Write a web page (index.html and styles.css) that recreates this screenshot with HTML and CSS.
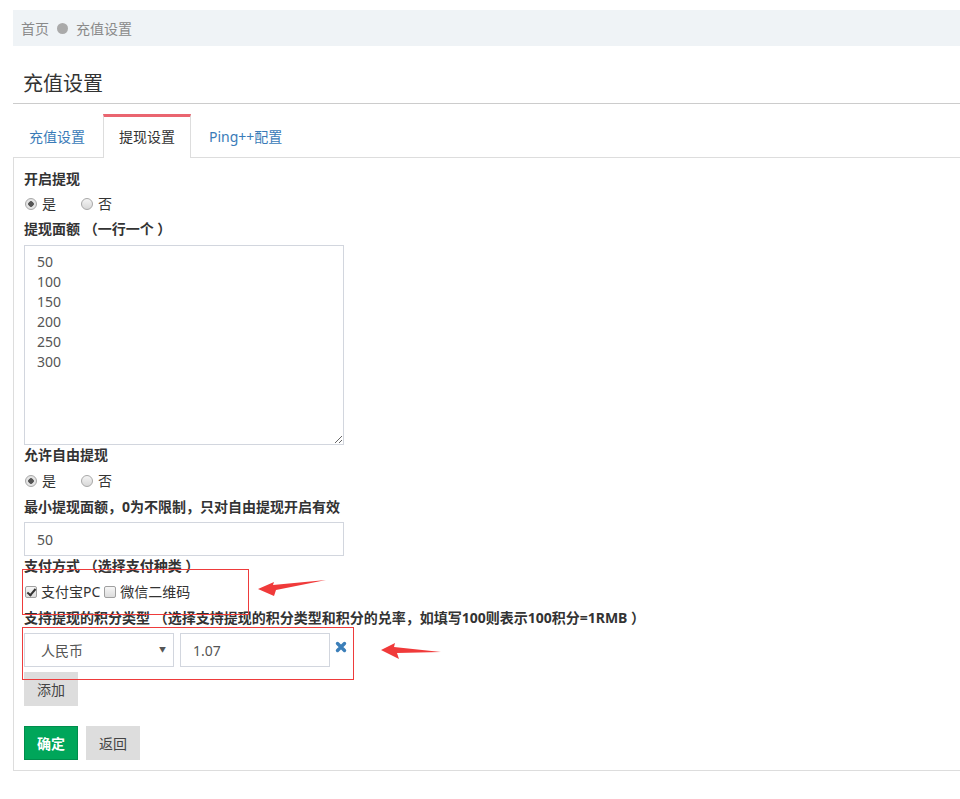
FILE: index.html
```html
<!DOCTYPE html>
<html lang="zh-CN">
<head>
  <meta charset="UTF-8">
  <title>充值设置</title>
  <link rel="stylesheet" href="styles.css">
</head>
<body>
  <div class="page">

    <!-- 面包屑 -->
    <div class="breadcrumb">
      <span>首页</span>
      <span class="dot"></span>
      <span>充值设置</span>
    </div>

    <!-- 标题 -->
    <div class="page-title">
      <h2>充值设置</h2>
    </div>

    <!-- 选项卡 -->
    <div class="tabs">
      <a href="#" class="tab">充值设置</a>
      <a href="#" class="tab active">提现设置</a>
      <a href="#" class="tab">Ping++配置</a>
    </div>

    <!-- 表单 -->
    <div class="panel">
      <label class="lbl">开启提现</label>
      <div class="radios">
        <label><input type="radio" name="open" checked> 是</label>
        <label><input type="radio" name="open"> 否</label>
      </div>

      <label class="lbl lbl-area">提现面额 （一行一个 ）</label>
      <textarea class="amounts">50
100
150
200
250
300</textarea>

      <label class="lbl">允许自由提现</label>
      <div class="radios radios-free">
        <label><input type="radio" name="free" checked> 是</label>
        <label><input type="radio" name="free"> 否</label>
      </div>

      <label class="lbl lbl-input">最小提现面额，0为不限制，只对自由提现开启有效</label>
      <input type="text" class="field" value="50">

      <label class="lbl lbl-pay">支付方式 （选择支付种类 ）</label>
      <div class="checks marked">
        <span class="mark-box mark-pay"></span>
        <svg class="arrow arrow-pay" width="70" height="20" viewBox="0 0 70 20">
          <polygon points="0,11 16,4 15,7 68,2 18,12 16,18" fill="#f03a3a"/>
        </svg>
        <label><input type="checkbox" checked> 支付宝PC</label>
        <label><input type="checkbox"> 微信二维码</label>
      </div>

      <label class="lbl lbl-input">支持提现的积分类型 （选择支持提现的积分类型和积分的兑率，如填写100则表示100积分=1RMB ）</label>
      <div class="credit-row marked">
        <span class="mark-box mark-credit"></span>
        <svg class="arrow arrow-credit" width="62" height="18" viewBox="0 0 62 18">
          <polygon points="0,8 14,1 13,5 60,10 16,11 18,17" fill="#f03a3a"/>
        </svg>
        <span class="select-wrap">
          <select class="select">
            <option>人民币</option>
          </select>
        </span>
        <input type="text" class="field field-small" value="1.07">
        <svg class="remove" width="12" height="12" viewBox="0 0 12 12">
          <path d="M2.5 2.5 L9.5 9.5 M9.5 2.5 L2.5 9.5" stroke="#3c7fb9" stroke-width="3.4" stroke-linecap="round"/>
        </svg>
      </div>
      <button class="btn btn-gray">添加</button>

      <div class="actions">
        <button class="btn btn-green">确定</button>
        <button class="btn btn-gray">返回</button>
      </div>
    </div>

  </div>
</body>
</html>
```

FILE: styles.css
```css
body {
  margin: 0;
  font-family: "Noto Sans", "Noto Sans CJK SC", sans-serif;
  font-size: 14px;
  color: #333;
  background: #fff;
}

.page {
  padding: 10px 0 0 13px;
}

/* 面包屑 */
.breadcrumb {
  height: 36px;
  background: #eff3f6;
  display: flex;
  align-items: center;
  gap: 8px;
  padding-left: 8px;
  color: #8a8a8a;
  font-size: 14px;
}

.breadcrumb .dot {
  width: 11px;
  height: 11px;
  border-radius: 50%;
  background: #aaa;
}

/* 标题 */
.page-title {
  padding: 24px 10px 5px;
  border-bottom: 1px solid #ccc;
}

.page-title h2 {
  margin: 0;
  font-size: 20px;
  line-height: 28px;
  font-weight: normal;
  color: #333;
}

/* 选项卡 */
.tabs {
  display: flex;
  gap: 2px;
  margin-top: 10px;
  border-bottom: 1px solid #ddd;
}

.tab {
  display: block;
  padding: 10px 15px;
  line-height: 20px;
  border: 1px solid transparent;
  border-top: 3px solid transparent;
  border-bottom: none;
  color: #3a7bb8;
  text-decoration: none;
}

.tab.active {
  color: #333;
  background: #fff;
  border-color: #ddd;
  border-top-color: #ea6570;
  margin-bottom: -1px;
  padding-bottom: 11px;
}

/* 表单面板 */
.panel {
  border-left: 1px solid #ddd;
  border-bottom: 1px solid #ddd;
  padding: 11px 10px 10px;
}

.lbl {
  display: block;
  font-weight: bold;
  line-height: 20px;
  margin-bottom: 5px;
  color: #333;
}

.lbl-area {
  margin-bottom: 6px;
}

.lbl-pay {
  margin-bottom: 6px;
}

.radios {
  display: flex;
  line-height: 20px;
  margin-bottom: 5px;
}

.radios-free {
  margin-top: 6px;
  margin-bottom: 6px;
}

.radios label {
  display: flex;
  align-items: center;
  margin-right: 24px;
}

input[type="radio"] {
  appearance: none;
  width: 12px;
  height: 12px;
  margin: 0 5px 0 1px;
  border: 1px solid #a8a8a8;
  border-radius: 50%;
  background: linear-gradient(#f4f4f4, #d8d8d8);
}

input[type="radio"]:checked {
  background: radial-gradient(circle, #555 0 2.5px, #e4e4e4 3px);
}

.amounts {
  display: block;
  box-sizing: border-box;
  width: 320px;
  height: 200px;
  padding: 6px 12px;
  border: 1px solid #d2d6de;
  font-family: inherit;
  font-size: 14px;
  line-height: 20px;
  color: #555;
  margin: 0;
}

.field {
  display: block;
  box-sizing: border-box;
  width: 320px;
  height: 34px;
  padding: 0 12px;
  border: 1px solid #d2d6de;
  font-family: inherit;
  font-size: 14px;
  color: #555;
  margin: 0;
}

/* 支付方式 */
.checks {
  display: flex;
  align-items: center;
  line-height: 20px;
  margin-bottom: 6px;
}

.checks label {
  display: flex;
  align-items: center;
  margin-right: 3px;
}

input[type="checkbox"] {
  appearance: none;
  position: relative;
  width: 12px;
  height: 12px;
  margin: 0 4px 0 1px;
  border: 1px solid #a0a0a0;
  border-radius: 2px;
  background: linear-gradient(#f6f6f6, #dcdcdc);
}

input[type="checkbox"]:checked::after {
  content: "";
  position: absolute;
  left: 3px;
  top: 0;
  width: 3px;
  height: 7px;
  border: solid #333;
  border-width: 0 2px 2px 0;
  transform: rotate(40deg);
}

/* 标注 */
.marked {
  position: relative;
}

.mark-box {
  position: absolute;
  border: 1px solid #ee3b3b;
  pointer-events: none;
}

.mark-pay {
  left: -2px;
  top: -13px;
  width: 225px;
  height: 44px;
}

.mark-credit {
  left: -2px;
  top: -6px;
  width: 330px;
  height: 51px;
}

.arrow {
  position: absolute;
}

.arrow-pay {
  left: 234px;
  top: -4px;
}

.arrow-credit {
  left: 357px;
  top: 9px;
}

/* 积分类型 */
.credit-row {
  display: flex;
  align-items: center;
  gap: 6px;
  margin-bottom: 5px;
}

.select-wrap {
  position: relative;
}

.select-wrap::after {
  content: "▼";
  position: absolute;
  right: 8px;
  top: 11px;
  font-size: 7px;
  color: #555;
  pointer-events: none;
}

.select {
  appearance: none;
  display: block;
  box-sizing: border-box;
  width: 150px;
  height: 34px;
  padding: 0 16px;
  border: 1px solid #d2d6de;
  border-radius: 0;
  background: #fff;
  font-family: inherit;
  font-size: 14px;
  color: #555;
}

.field-small {
  width: 150px;
}

.remove {
  margin-left: -1px;
  margin-top: -6px;
}

/* 按钮 */
.btn {
  display: inline-block;
  box-sizing: border-box;
  height: 34px;
  padding: 0 12px;
  border: 1px solid transparent;
  border-radius: 0;
  font-family: inherit;
  font-size: 14px;
  cursor: pointer;
}

.btn-gray {
  background: #ddd;
  color: #444;
}

.btn-green {
  background: #00a65a;
  border-color: #008d4c;
  color: #fff;
  font-weight: bold;
}

.actions {
  display: flex;
  gap: 8px;
  margin-top: 20px;
}
```
